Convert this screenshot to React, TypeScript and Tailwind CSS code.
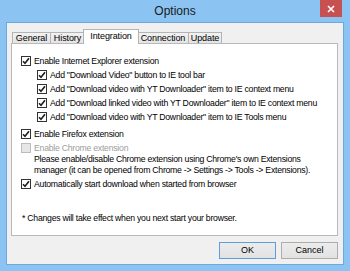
import React from "react";

const font = "font-['Liberation_Sans',Arial,sans-serif]";

function Check({ checked = true, disabled = false }: { checked?: boolean; disabled?: boolean }) {
  return (
    <span
      className={`flex h-[10px] w-[10px] shrink-0 items-center justify-center border ${
        disabled ? "border-[#bcbcbc] bg-[#e6e6e6]" : "border-[#333333] bg-white"
      }`}
    >
      {checked && !disabled ? (
        <svg width="8" height="8" viewBox="0 0 8 8">
          <path d="M1 4.2 L3 6.3 L7 1.2" fill="none" stroke="#1e1e1e" strokeWidth="1.6" />
        </svg>
      ) : null}
    </span>
  );
}

function Row({ label, sub = false, checked = true, disabled = false, className = "" }: {
  label: string;
  sub?: boolean;
  checked?: boolean;
  disabled?: boolean;
  className?: string;
}) {
  return (
    <div className={`flex h-[14px] items-center gap-[3px] ${sub ? "pl-[25px]" : "pl-[9px]"} ${className}`}>
      <Check checked={checked} disabled={disabled} />
      <span
        className={`whitespace-nowrap text-[8.7px] leading-none tracking-[-0.25px] ${
          disabled ? "text-[#9d9d9d]" : "text-black"
        }`}
      >
        {label}
      </span>
    </div>
  );
}

function Tab({ label, selected = false, className = "" }: { label: string; selected?: boolean; className?: string }) {
  return (
    <div
      className={`flex items-center justify-center border-x border-t border-[#b4b4b4] text-[9px] leading-none tracking-[-0.1px] text-black ${
        selected
          ? "relative z-10 -mb-px h-[15px] bg-white pb-[2px]"
          : "h-[11px] bg-gradient-to-b from-[#f2f2f2] to-[#e4e4e4]"
      } ${className}`}
    >
      {label}
    </div>
  );
}

export default function App() {
  return (
    <div className={`flex h-[271px] w-[350px] flex-col bg-[#8bc3f3] ${font}`}>
      <div className="grid h-[22px] grid-cols-[1fr_auto_1fr]">
        <div />
        <div className="pt-[5px] text-[12px] leading-none text-[#1a1a1a]">Options</div>
        <div className="flex justify-end pr-[8px]">
          <div className="flex h-[17px] w-[22px] items-center justify-center bg-[#c75050]">
            <svg width="8" height="8" viewBox="0 0 8 8">
              <path d="M1 1 L7 7 M7 1 L1 7" stroke="white" strokeWidth="1.6" />
            </svg>
          </div>
        </div>
      </div>

      <div className="mx-[6px] mb-[6px] flex flex-1 flex-col border border-[#6fa8dc] bg-[#f0f0f0] pl-[4px] pr-[5px] pt-[6px]">
        <div className="flex h-[14px] items-end pl-[1px]">
          <Tab label="General" className="w-[39px]" />
          <Tab label="History" className="-ml-px w-[35px]" />
          <Tab label="Integration" selected className="-ml-[2px] w-[56px]" />
          <Tab label="Connection" className="-ml-[2px] w-[52px]" />
          <Tab label="Update" className="-ml-px w-[34px]" />
        </div>

        <div className="flex h-[193px] flex-col border border-[#b9b9b9] bg-white pt-[10px]">
          <Row label="Enable Internet Explorer extension" />
          <Row sub label={'Add "Download Video" button to IE tool bar'} />
          <Row sub label={'Add "Download video with YT Downloader" item to IE context menu'} />
          <Row sub label={'Add "Download linked video with YT Downloader" item to IE context menu'} />
          <Row sub label={'Add "Download video with YT Downloader" item to IE Tools menu'} />
          <Row label="Enable Firefox extension" className="mt-[3px]" />
          <Row label="Enable Chrome extension" checked={false} disabled className="mt-[1px] !h-[12px]" />
          <div className="whitespace-nowrap pl-[22px] text-[8.7px] leading-[11px] tracking-[-0.25px] text-black">
            <div>Please enable/disable Chrome extension using Chrome's own Extensions</div>
            <div>manager (it can be opened from Chrome -&gt; Settings -&gt; Tools -&gt; Extensions).</div>
          </div>
          <Row label="Automatically start download when started from browser" className="mt-[1px]" />
          <div className="mt-[20px] flex h-[14px] items-center pl-[10px] text-[8.7px] leading-none tracking-[-0.25px] text-black">
            * Changes will take effect when you next start your browser.
          </div>
        </div>

        <div className="mt-[6px] flex justify-end gap-[5px]">
          <button className="flex h-[17px] w-[57px] items-center justify-center border border-[#5d9ddb] bg-gradient-to-b from-[#ececec] to-[#e2e2e2] text-[9px] leading-none text-black">
            OK
          </button>
          <button className="flex h-[17px] w-[57px] items-center justify-center border border-[#adadad] bg-gradient-to-b from-[#ececec] to-[#e2e2e2] text-[9px] leading-none text-black">
            Cancel
          </button>
        </div>
      </div>
    </div>
  );
}
